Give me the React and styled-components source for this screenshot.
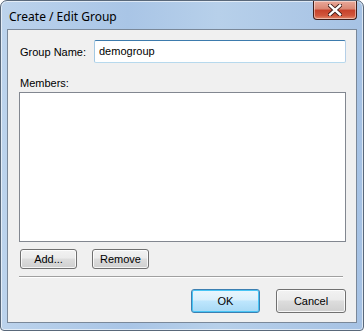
import styled, { createGlobalStyle } from "styled-components";

const Global = createGlobalStyle`
  html, body { margin: 0; padding: 0; background: #ffffff; }
  body { font-family: "Liberation Sans", Arial, sans-serif; }
`;

const Frame = styled.div`
  width: 364px;
  height: 331px;
  box-sizing: border-box;
  border: 1px solid #59687a;
  border-radius: 7px 7px 4px 4px;
  background: linear-gradient(90deg, #bcd3ec 0%, #a9c5e6 35%, #b7d0ea 60%, #a6c2e4 100%);
  box-shadow: inset 0 0 0 1px rgba(255, 255, 255, 0.6);
  padding: 0 6px 7px 6px;
  display: flex;
  flex-direction: column;
`;

const TitleBar = styled.div`
  height: 28px;
  display: flex;
  align-items: flex-start;
  justify-content: space-between;
`;

const Title = styled.div`
  font-family: "Noto Sans", "Open Sans", sans-serif;
  font-size: 12px;
  color: #000;
  padding: 7px 0 0 2px;
`;

const CloseButton = styled.div`
  width: 44px;
  height: 19px;
  box-sizing: border-box;
  border: 1px solid #3f1e1a;
  border-top: none;
  border-radius: 0 0 4px 4px;
  background: linear-gradient(#e9a99a 0%, #d98673 45%, #c6412a 50%, #d0553b 80%, #e28a6d 100%);
  box-shadow: inset 0 0 0 1px rgba(255, 255, 255, 0.45);
  display: flex;
  align-items: center;
  justify-content: center;
`;

const Client = styled.div`
  flex: 1;
  box-sizing: border-box;
  border: 1px solid #7a8899;
  background: #f0f0f0;
  padding: 10px 9px 0 11px;
  display: flex;
  flex-direction: column;
  font-size: 11px;
  color: #000;
`;

const Row = styled.div`
  display: flex;
  align-items: center;
`;

const Label = styled.div`
  width: 74px;
  padding-left: 1px;
`;

const TextBox = styled.div`
  width: 252px;
  height: 23px;
  box-sizing: border-box;
  border: 1px solid #abadb3;
  border-color: #3d7bad #b5cfe7 #b7d9ed #a4c9e3;
  border-radius: 2px;
  background: #fff;
  padding: 4px 0 0 4px;
  font-size: 11px;
`;

const SectionLabel = styled.div`
  margin-top: 14px;
  padding-left: 1px;
  height: 13px;
`;

const ListBox = styled.div`
  margin-top: 2px;
  width: 327px;
  height: 150px;
  box-sizing: border-box;
  border: 1px solid #828790;
  background: #fff;
`;

const ButtonRow = styled.div`
  display: flex;
  gap: ${(p) => p.gap}px;
  margin-top: ${(p) => p.top}px;
  justify-content: ${(p) => (p.right ? "flex-end" : "flex-start")};
  padding-left: ${(p) => (p.right ? 0 : 1)}px;
  padding-right: ${(p) => (p.right ? 1 : 0)}px;
`;

const Button = styled.div`
  width: ${(p) => p.w}px;
  height: ${(p) => p.h}px;
  box-sizing: border-box;
  border: 1px solid ${(p) => (p.primary ? "#3c7fb1" : "#707070")};
  border-radius: 3px;
  background: ${(p) =>
    p.primary
      ? "linear-gradient(#eaf6fd 0%, #d9f0fc 45%, #bee6fd 50%, #a7d9f5 100%)"
      : "linear-gradient(#f2f2f2 0%, #ebebeb 45%, #dddddd 50%, #cfcfcf 100%)"};
  box-shadow: inset 0 0 0 1px ${(p) => (p.primary ? "#48c5f5" : "rgba(255,255,255,0.8)")};
  display: flex;
  align-items: center;
  justify-content: center;
  font-size: 11px;
`;

const Separator = styled.div`
  margin-top: 7px;
  width: 324px;
  height: 2px;
  border-top: 1px solid #a0a0a0;
  border-bottom: 1px solid #ffffff;
  box-sizing: border-box;
`;

export default function App() {
  return (
    <>
      <Global />
      <Frame>
        <TitleBar>
          <Title>Create / Edit Group</Title>
          <CloseButton>
            <svg width="14" height="12" viewBox="0 0 14 12">
              <path
                d="M2 1.5 L12 10.5 M12 1.5 L2 10.5"
                stroke="#3a1a16"
                strokeWidth="4.2"
                strokeLinecap="square"
              />
              <path
                d="M2 1.5 L12 10.5 M12 1.5 L2 10.5"
                stroke="#ffffff"
                strokeWidth="2.4"
                strokeLinecap="square"
              />
            </svg>
          </CloseButton>
        </TitleBar>
        <Client>
          <Row>
            <Label>Group Name:</Label>
            <TextBox>demogroup</TextBox>
          </Row>
          <SectionLabel>Members:</SectionLabel>
          <ListBox />
          <ButtonRow gap={15} top={7}>
            <Button w={57} h={20}>Add...</Button>
            <Button w={57} h={20}>Remove</Button>
          </ButtonRow>
          <Separator />
          <ButtonRow right gap={16} top={11}>
            <Button primary w={69} h={24}>OK</Button>
            <Button w={70} h={24}>Cancel</Button>
          </ButtonRow>
        </Client>
      </Frame>
    </>
  );
}
